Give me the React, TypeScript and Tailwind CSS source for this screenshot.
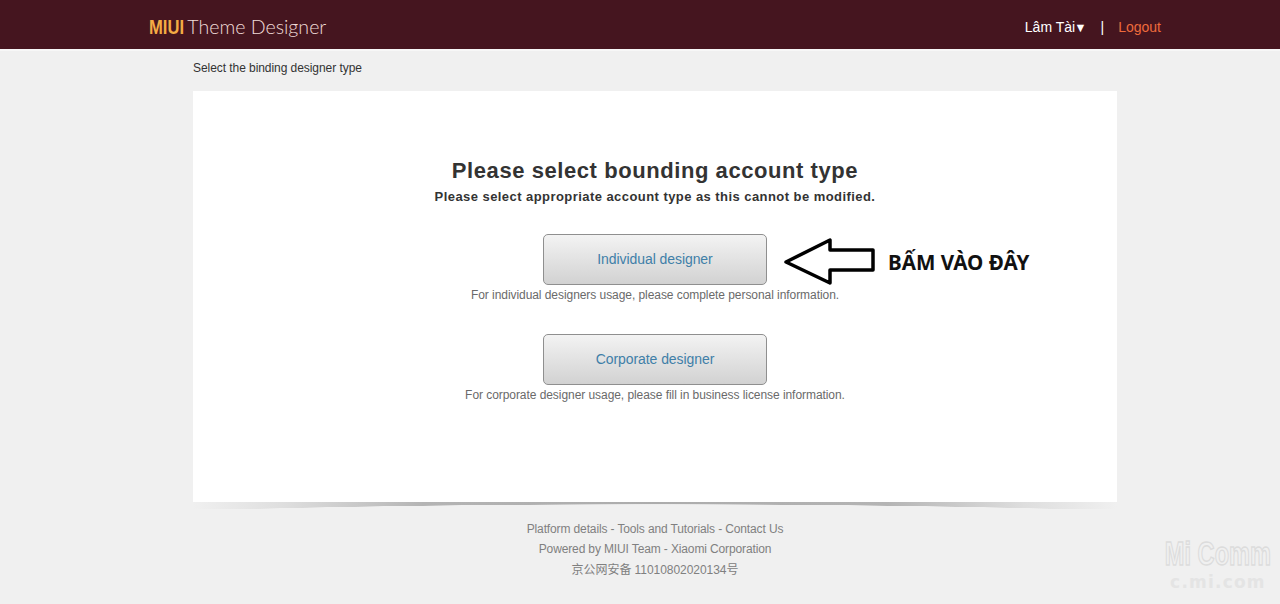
const font = { fontFamily: '"Liberation Sans", Arial, sans-serif' };

const ChoiceRow = ({
  label,
  hint,
  children,
}: {
  label: string;
  hint: string;
  children?: React.ReactNode;
}) => {
  return (
    <div className="flex flex-col items-center">
      <div className="relative">
        <button className="block w-[224px] h-[51px] rounded-[5px] border border-[#8f8f8f] bg-gradient-to-b from-[#f3f3f3] to-[#d2d2d2] text-[14px] tracking-[-0.07px] text-[#3f7fa8]">
          {label}
        </button>
        {children}
      </div>
      <p className="mt-[2px] text-[12px] leading-[16px] tracking-[-0.06px] text-[#6a6a6a]">{hint}</p>
    </div>
  );
};

export default function App() {
  return (
    <div
      className="relative h-[604px] w-[1280px] overflow-hidden bg-[#f0f0f0]"
      style={font}
    >
      {/* header */}
      <header className="flex h-[49px] items-center justify-between bg-[#45151f] pl-[149px] pr-[119px]">
        <div className="mt-[4px] flex items-baseline text-[20px] leading-none">
          <span className="inline-block origin-left scale-x-[0.83] font-bold text-[#f4ab44]">
            MIUI
          </span>
          <span className="-ml-[4px] text-[19.6px] font-light text-[#f0dcd8] [font-family:Lato,sans-serif]">
            Theme Designer
          </span>
        </div>
        <div className="mt-[6px] flex items-center text-[14px]">
          <span className="text-white">
            Lâm Tài<span className="-ml-[1px] text-[12.5px]">▼</span>
          </span>
          <span className="ml-[14px] text-white">|</span>
          <a className="ml-[14px] text-[#ee6b3c]">Logout</a>
        </div>
      </header>
      <div className="h-[2px] bg-[#f7f7f7]" />

      <main className="ml-[193px] w-[924px]">
        <p className="mt-[10px] text-[12px] leading-[14px] tracking-[-0.06px] text-[#333333]">
          Select the binding designer type
        </p>

        {/* card */}
        <section className="mt-[16px] flex h-[411px] flex-col items-center bg-white pt-[65px]">
          <h1 className="text-[22px] font-bold leading-[30px] text-[#333333] tracking-[0.57px]">
            Please select bounding account type
          </h1>
          <p className="mt-[2px] text-[13px] font-bold leading-[18px] text-[#333333] tracking-[0.44px]">
            Please select appropriate account type as this cannot be modified.
          </p>

          <div className="mt-[28px] flex flex-col gap-[31px]">
            <ChoiceRow
              label="Individual designer"
              hint="For individual designers usage, please complete personal information."
            >
              <svg
                width="110"
                height="52"
                viewBox="0 0 110 52"
                className="absolute left-full top-0"
              >
                <path
                  d="M19 28 L63 6 L63 16 L106 16 L106 36 L63 36 L63 49 Z"
                  fill="white"
                  stroke="black"
                  strokeWidth="3.5"
                  strokeLinejoin="round"
                />
              </svg>
            </ChoiceRow>
            <ChoiceRow
              label="Corporate designer"
              hint="For corporate designer usage, please fill in business license information."
            />
          </div>
        </section>

        {/* shadow under the card */}
        <div className="h-[7px] bg-[radial-gradient(ellipse_70%_300%_at_50%_330%,#f0f0f0_98%,transparent_100%),linear-gradient(to_right,#f0f0f0_0%,#dedede_10%,#b4b4b4_25%,#acacac_50%,#b4b4b4_75%,#dedede_90%,#f0f0f0_100%)]" />

        <footer className="mt-[10px] text-center text-[12px] leading-[20px] tracking-[-0.13px] text-[#808080]">
          <p>Platform details - Tools and Tutorials - Contact Us</p>
          <p>Powered by MIUI Team - Xiaomi Corporation</p>
          <p className="mt-[1px] tracking-[-0.05px] [font-family:'Liberation_Sans','Noto_Sans_CJK_SC',sans-serif]">
            京公网安备 11010802020134号
          </p>
        </footer>
      </main>

      {/* annotation on the screenshot */}
      <span className="absolute left-[888px] top-[249px] font-['Noto_Sans'] text-[20.6px] font-bold leading-[26px] text-[#111111]">
        BẤM VÀO ĐÂY
      </span>

      {/* watermark */}
      <div className="absolute right-[9px] top-[540px] flex flex-col items-center text-transparent">
        <div className="origin-top scale-y-[1.4] text-[23.6px] font-bold leading-[20px] [-webkit-text-stroke:1px_#dcdcdc]">
          Mi Comm
        </div>
        <div className="mt-[12px] text-[17px] font-bold leading-[20px] tracking-[1.2px] text-[#e4e4e4] [font-family:'DejaVu_Sans',sans-serif]">
          c.mi.com
        </div>
      </div>
    </div>
  );
}
